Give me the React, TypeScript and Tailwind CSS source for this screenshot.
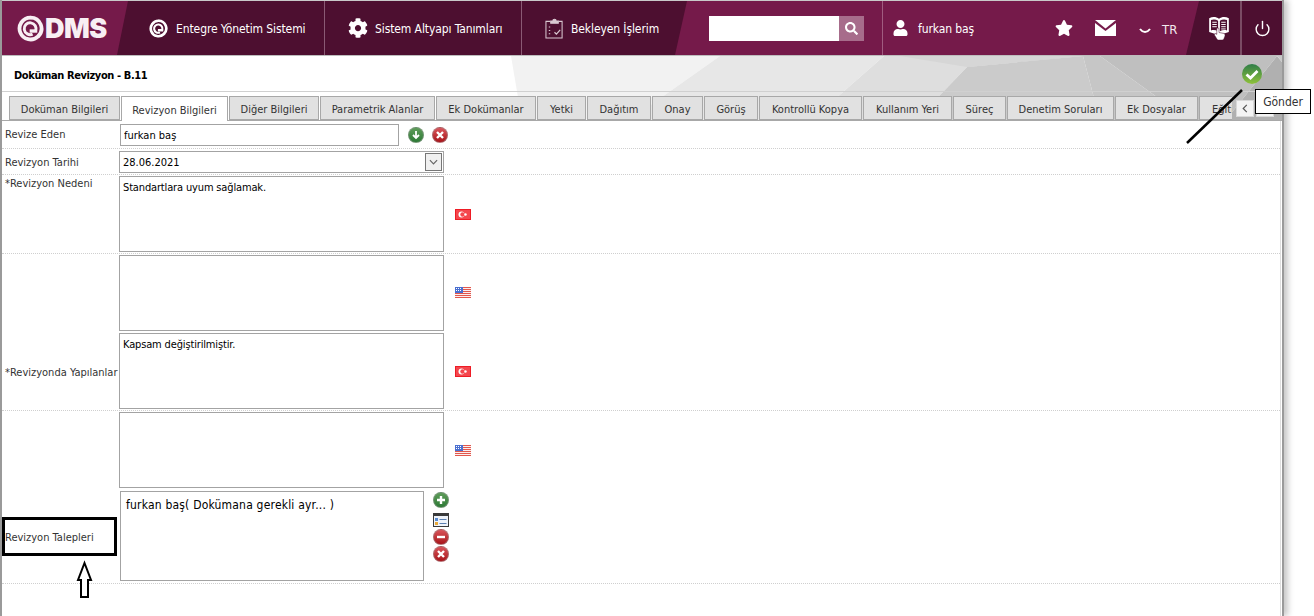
import { FaCog, FaSearch, FaStar, FaUser } from "react-icons/fa";
import { Power } from "lucide-react";

const tabs = [
  { label: "Doküman Bilgileri", w: "w-[111px]" },
  { label: "Revizyon Bilgileri", w: "w-[107px]", active: true },
  { label: "Diğer Bilgileri", w: "w-[90px]" },
  { label: "Parametrik Alanlar", w: "w-[115px]" },
  { label: "Ek Dokümanlar", w: "w-[100px]" },
  { label: "Yetki", w: "w-[49px]" },
  { label: "Dağıtım", w: "w-[64px]" },
  { label: "Onay", w: "w-[51px]" },
  { label: "Görüş", w: "w-[54px]" },
  { label: "Kontrollü Kopya", w: "w-[103px]" },
  { label: "Kullanım Yeri", w: "w-[89px]" },
  { label: "Süreç", w: "w-[53px]" },
  { label: "Denetim Soruları", w: "w-[107px]" },
  { label: "Ek Dosyalar", w: "w-[83px]" },
];

function QMark({ className }: { className: string }) {
  return (
    <svg viewBox="0 0 32 32" className={className} fill="none">
      <path d="M16 3a13 13 0 1 0 9 22.400" stroke="currentColor" strokeWidth="4.500" strokeLinecap="round" />
      <path d="M25 25.400A13 13 0 0 0 16 3" stroke="currentColor" strokeWidth="4.500" />
      <path d="M22 19a7 7 0 1 0-3.500 3.600" stroke="currentColor" strokeWidth="3.500" />
      <path d="M15 17h9v4h-9z" fill="currentColor" />
    </svg>
  );
}

function ClipboardIcon() {
  return (
    <svg viewBox="0 0 20 22" className="w-[19px] h-[21px]" fill="none" stroke="#d9c8d1" strokeWidth="1.100">
      <path d="M5.500 3.500H1v17.500h17V3.500h-4" />
      <path d="M6 5.500V3h2.200a1.800 1.800 0 0 1 3.600 0H14v2.500z" fill="#d9c8d1" />
      <path d="M4 9.500h2M4 13h2M4 16.500h2" strokeDasharray="1.500 1" />
      <path d="M10 15l2 2 4-4.500" strokeWidth="1.300" />
    </svg>
  );
}

function BookHandIcon() {
  return (
    <svg viewBox="0 0 24 28" className="w-[22px] h-[25px]">
      <path d="M1 2.500C5 .5 9 1 12 3c3-2 7-2.500 11-.5V18l-6 2H7l-6-2z" fill="#fff" />
      <path d="M3 4.500c3-1 5.500-.7 8 .8V17c-2.500-1.300-5-1.500-8-.8zM13 5.300c2.500-1.500 5-1.800 8-.8v11.700c-3-.7-5.500-.5-8 .8z" fill="#4d0f30" />
      <path d="M4.500 7h5M4.500 9.500h5M4.500 12h5M14.500 7h5M14.500 9.500h5M14.500 12h5M14.500 14.500h5" stroke="#fff" strokeWidth="1.100" />
      <path d="M9.500 14.500c0-1.500 2.500-1.500 2.500 0v4l5.500 1c1.500.5 1.500 2 1 3.500l-1 2.500c-.5 1-1 1.500-2 1.500h-4c-1 0-1.500-.5-2-1.500l-2.500-4c-.7-1.300.8-2.500 2.500-1z" fill="#fff" stroke="#4d0f30" strokeWidth=".6" />
    </svg>
  );
}

function RoundIcon({ tone, children }: { tone: "green" | "red"; children: React.ReactNode }) {
  const bg =
    tone === "green"
      ? "bg-gradient-to-b from-[#5d9c59] to-[#2c7a35]"
      : "bg-gradient-to-b from-[#d9535a] to-[#a80f18]";
  return (
    <span className={`flex items-center justify-center w-4 h-4 rounded-full shrink-0 border border-[#9a9a9a]/50 ${bg}`}>
      <svg viewBox="0 0 12 12" className="w-3 h-3" fill="none" stroke="#fff" strokeWidth="2.400">
        {children}
      </svg>
    </span>
  );
}

function TurkishFlag() {
  return (
    <svg viewBox="0 0 16 11" className="w-4 h-[11px]">
      <rect width="16" height="11" fill="#ee1c25" />
      <rect x="1" y="1" width="14" height="9" fill="#f4474e" />
      <circle cx="6.500" cy="5.500" r="3" fill="#fff" />
      <circle cx="7.500" cy="5.500" r="2.200" fill="#f4474e" />
      <circle cx="10.500" cy="5.500" r="1.200" fill="#fff" />
    </svg>
  );
}

function UsFlag() {
  return (
    <svg viewBox="0 0 16 11" className="w-4 h-[11px]">
      <rect width="16" height="11" fill="#fbeeee" />
      <path d="M0 .5h16M0 2.500h16M0 4.500h16M0 6.500h16M0 8.500h16M0 10.500h16" stroke="#e2574c" />
      <rect width="8" height="6" fill="#4a6fd0" />
      <path d="M1 1.500h6M1 3.500h6" stroke="#fff" strokeDasharray="1 1" />
    </svg>
  );
}

const box = "w-[325px] h-[76px] border border-[#a3a3a3] bg-white resize-none outline-none px-[3px] py-[3px] text-[11px] tracking-[-0.15px] text-black block";

function Label({ children, className = "" }: { children: React.ReactNode; className?: string }) {
  return <div className={`w-[117px] shrink-0 pl-[3px] text-[#333] whitespace-nowrap ${className}`}>{children}</div>;
}

function TextRow({ label, value, flag, labelClass, rowClass }: { label?: string; value?: string; flag: React.ReactNode; labelClass?: string; rowClass: string }) {
  return (
    <div className={`flex items-center ${rowClass}`}>
      <Label className={labelClass}>{label}</Label>
      <textarea readOnly defaultValue={value} className={box} />
      <div className="ml-[11px]">{flag}</div>
    </div>
  );
}

export default function App() {
  return (
    <div className="relative h-[616px] w-[1314px] overflow-hidden bg-white font-['DejaVu_Sans_Condensed','DejaVu_Sans',sans-serif] text-[11px]">
      <div className="h-[616px] w-[1284px] border-x-2 border-[#9a9a9a] shadow-[4px_0_6px_rgba(0,0,0,0.22)] bg-white">
        {/* NAV */}
        <div className="h-[56px] border-t border-[#c9c9c9] border-b border-b-[#bdbdbd] bg-[#751a4a] flex text-white text-[12px] tracking-[-0.1px]">
          <div className="w-[115px] shrink-0 flex items-center pl-[15px] gap-[1px] text-[#f8eef3]">
            <QMark className="w-[27px] h-[27px]" />
            <span className="font-['Inter',sans-serif] font-black text-[27px] tracking-[-0.6px] leading-none">DMS</span>
          </div>
          <div className="w-[570px] shrink-0 flex bg-[#4d0f30] [clip-path:polygon(11px_0,100%_0,calc(100%-12px)_100%,0_100%)]">
            <div className="w-[208px] flex items-center pl-[32px] gap-[8px] border-r border-[#8a5a74]">
              <QMark className="w-[19px] h-[19px]" />
              <span className="pt-[1px]">Entegre Yönetim Sistemi</span>
            </div>
            <div className="w-[197px] flex items-center pl-[23px] gap-[7px] border-r border-[#8a5a74]">
              <FaCog className="w-[20px] h-[20px]" />
              <span className="pt-[1px]">Sistem Altyapı Tanımları</span>
            </div>
            <div className="flex items-center pl-[23px] gap-[7px]">
              <ClipboardIcon />
              <span className="pt-[1px]">Bekleyen İşlerim</span>
            </div>
          </div>
          <div className="w-[22px] shrink-0" />
          <div className="w-[155px] shrink-0 flex items-center">
            <div className="w-[130px] h-[25px] bg-white" />
            <div className="w-[25px] h-[25px] bg-[#a76c8b] flex items-center justify-center">
              <FaSearch className="w-[13px] h-[13px]" />
            </div>
          </div>
          <div className="w-[18px] shrink-0" />
          <div className="flex-1 flex items-center border-l border-[#a05c80] pl-[10px] relative">
            <FaUser className="w-[15px] h-[16px]" />
            <span className="ml-[10px] pt-[1px]">furkan baş</span>
            <FaStar className="ml-[81px] w-[18px] h-[18px]" />
            <svg viewBox="0 0 21 16" className="ml-[22px] w-[21px] h-[16px]" fill="#fff">
              <path d="M0 0h21L10.500 8.500z" />
              <path d="M0 3l10.500 8L21 3v13H0z" />
            </svg>
            <svg viewBox="0 0 12 6" className="ml-[23px] mt-[6px] w-[12px] h-[6px]" fill="none" stroke="#fff" strokeWidth="2">
              <path d="M1 1c3 4 7 4 10 0" />
            </svg>
            <span className="ml-[11px] mt-[3px] text-[13px] text-[#f3e8ee]">TR</span>
            <div className="absolute right-0 top-0 h-full w-[96px] flex bg-[#4d0f30] [clip-path:polygon(13px_0,100%_0,100%_100%,0_100%)]">
              <div className="w-[56px] flex items-center justify-center pl-[11px] border-r-2 border-[#7a4c64]">
                <BookHandIcon />
              </div>
              <div className="flex-1 flex items-center justify-center">
                <Power className="w-[17px] h-[17px]" strokeWidth={2} />
              </div>
            </div>
          </div>
        </div>

        {/* TITLE + TABS */}
        <div className="relative h-[65px] bg-white">
          <svg viewBox="2 56 1280 65" className="absolute inset-0 w-full h-full">
            <polygon points="511,56 720,56 628,121 522,121" fill="#f2f2f2" />
            <polygon points="720,56 884,56 810,121 628,121" fill="#e7e7e7" />
            <polygon points="884,56 1085,56 967,67 915,121 810,121" fill="#dedede" />
            <polygon points="900,56 1083,56 967,67" fill="#d6d6d6" />
            <polygon points="967,67 1083,56 1100,121 915,121" fill="#cbcbcb" />
            <polygon points="1083,56 1100,56 1190,121 1100,121" fill="#c6c6c6" />
            <polygon points="1100,56 1277,56 1225,121 1190,121" fill="#bfbfbf" />
            <polygon points="1277,56 1282,62 1282,121 1225,121" fill="#b0b0b0" />
            <polygon points="1277,56 1282,56 1282,62" fill="#c8c8c8" />
          </svg>
          <div className="relative h-[36px] border-b border-[#d0d0d0] flex items-center justify-between pl-[12px] pr-[20px]">
            <span className="font-bold text-black pt-[5px] tracking-[-0.4px]">Doküman Revizyon - B.11</span>
            <svg viewBox="0 0 20 20" className="w-[20px] h-[20px]">
              <defs>
                <linearGradient id="ok" x1="0" y1="0" x2="0" y2="1">
                  <stop offset="0" stopColor="#2f7d48" />
                  <stop offset="1" stopColor="#8fc23a" />
                </linearGradient>
              </defs>
              <circle cx="10" cy="10" r="10" fill="url(#ok)" />
              <path d="M4.500 10.500l4 3.500 7-7" fill="none" stroke="#fff" strokeWidth="2.800" />
            </svg>
          </div>
          <div className="relative h-[29px] pt-[4px] pl-[7px] w-[1230px] overflow-hidden">
            <div className="flex gap-[1px] w-[1400px]">
              {tabs.map((t) => (
                <div
                  key={t.label}
                  className={`shrink-0 flex items-center justify-center pt-[5px] border border-[#a8a8a8] text-[#333] ${t.w} ${
                    t.active ? "bg-white border-b-0 h-[25px] relative z-10" : "bg-[#e1e1e1] h-[24px]"
                  }`}
                >
                  {t.label}
                </div>
              ))}
              <div className="shrink-0 flex items-center pl-[12px] pt-[5px] border border-[#a8a8a8] text-[#333] w-[80px] h-[24px] bg-[#e1e1e1]">
                Eğitim
              </div>
            </div>
          </div>
          <div className="absolute left-0 w-[1280px] bottom-0 border-b border-[#a8a8a8]" />
        </div>

        {/* FORM */}
        <div className="w-[1279px] border-r border-[#dedede] h-[495px]">
          <div className="flex items-center h-[28px] border-b border-dotted border-[#cfcfcf]">
            <Label className="pt-[2px]">Revize Eden</Label>
            <input readOnly defaultValue="furkan baş" className="ml-[1px] w-[279px] h-[22px] border border-[#a3a3a3] px-[3px] pt-[2px] outline-none text-black" />
            <div className="ml-[9px] mr-[8px]">
              <RoundIcon tone="green"><path d="M6 2v7M3 6l3 3 3-3" strokeWidth="1.800" /></RoundIcon>
            </div>
            <RoundIcon tone="red"><path d="M3 3l6 6M9 3l-6 6" /></RoundIcon>
          </div>
          <div className="flex items-center h-[26px] border-b border-dotted border-[#cfcfcf]">
            <Label className="pt-[3px]">Revizyon Tarihi</Label>
            <div className="w-[325px] h-[22px] border border-[#a3a3a3] flex items-center justify-between pl-[3px] text-black">
              <span className="pt-[3px]">28.06.2021</span>
              <div className="w-[17px] h-[18px] mr-[1px] border border-[#777] bg-[#f0f0f0] flex items-center justify-center">
                <svg viewBox="0 0 10 6" className="w-[9px] h-[6px]" fill="none" stroke="#666" strokeWidth="1.300"><path d="M1 1l4 4 4-4" /></svg>
              </div>
            </div>
          </div>
          <TextRow
            label="*Revizyon Nedeni"
            value="Standartlara uyum sağlamak."
            flag={<TurkishFlag />}
            labelClass="self-start pt-[1px]"
            rowClass="h-[79px] border-b border-dotted border-[#cfcfcf]"
          />
          <TextRow flag={<UsFlag />} rowClass="h-[79px] pb-[2px]" />
          <TextRow
            label="*Revizyonda Yapılanlar"
            value="Kapsam değiştirilmiştir."
            flag={<TurkishFlag />}
            labelClass="pt-[4px]"
            rowClass="h-[78px] pb-[1px] border-b border-dotted border-[#cfcfcf]"
          />
          <TextRow flag={<UsFlag />} rowClass="h-[79px] pb-[1px]" />
          <div className="flex h-[94px] border-b border-dotted border-[#cfcfcf] pt-[1px]">
            <Label className="self-center pt-[2px]">Revizyon Talepleri</Label>
            <div className="ml-[1px] w-[304px] h-[90px] border border-[#a3a3a3] px-[5px] py-[4px] text-[12px] tracking-[0.2px] text-black">
              furkan baş( Dokümana gerekli ayr... )
            </div>
            <div className="ml-[9px] flex flex-col pt-[1px]">
              <RoundIcon tone="green"><path d="M6 2v8M2 6h8" /></RoundIcon>
              <svg viewBox="0 0 16 14" className="mt-[5px] w-4 h-[14px]">
                <rect width="16" height="14" fill="#3a3a3a" />
                <rect x="1" y="3" width="14" height="10" fill="#eef3fa" />
                <rect x="2" y="5" width="3" height="3" fill="#5b8bd0" />
                <rect x="2" y="9" width="3" height="3" fill="#e8a93a" />
                <path d="M6.500 6.500h7M6.500 10.500h7" stroke="#5b7fb0" />
              </svg>
              <div className="mt-[2px]">
                <RoundIcon tone="red"><path d="M2 6h8" /></RoundIcon>
              </div>
              <div className="mt-[1px]">
                <RoundIcon tone="red"><path d="M3 3l6 6M9 3l-6 6" /></RoundIcon>
              </div>
            </div>
          </div>
        </div>
      </div>

      {/* SCROLL BUTTONS + TOOLTIP */}
      <div className="absolute left-[1236px] top-[100px] flex gap-[2px]">
        <div className="w-[18px] h-[17px] bg-[#f3f3f3] border border-[#d8d8d8] flex items-center justify-center">
          <svg viewBox="0 0 6 10" className="w-[6px] h-[9px]" fill="none" stroke="#555" strokeWidth="1.300"><path d="M5 1L1 5l4 4" /></svg>
        </div>
        <div className="w-[18px] h-[17px] bg-[#f3f3f3] border border-[#d8d8d8]" />
      </div>
      <div className="absolute left-[1255px] top-[89px] w-[56px] h-[25px] bg-white border border-black flex items-center justify-center text-[12px] text-[#333]">
        Gönder
      </div>

      {/* ANNOTATIONS */}
      <div className="absolute left-[2px] top-[517px] w-[115px] h-[39px] border-[3px] border-black" />
      <svg className="absolute left-0 top-0 pointer-events-none" width="1314" height="616">
        <line x1="1242" y1="90" x2="1187" y2="143" stroke="#000" strokeWidth="2.500" />
        <polygon points="84.500,563 91,580 88,580 88,597 81,597 81,580 78,580" fill="#fff" stroke="#000" strokeWidth="2" />
      </svg>
    </div>
  );
}
